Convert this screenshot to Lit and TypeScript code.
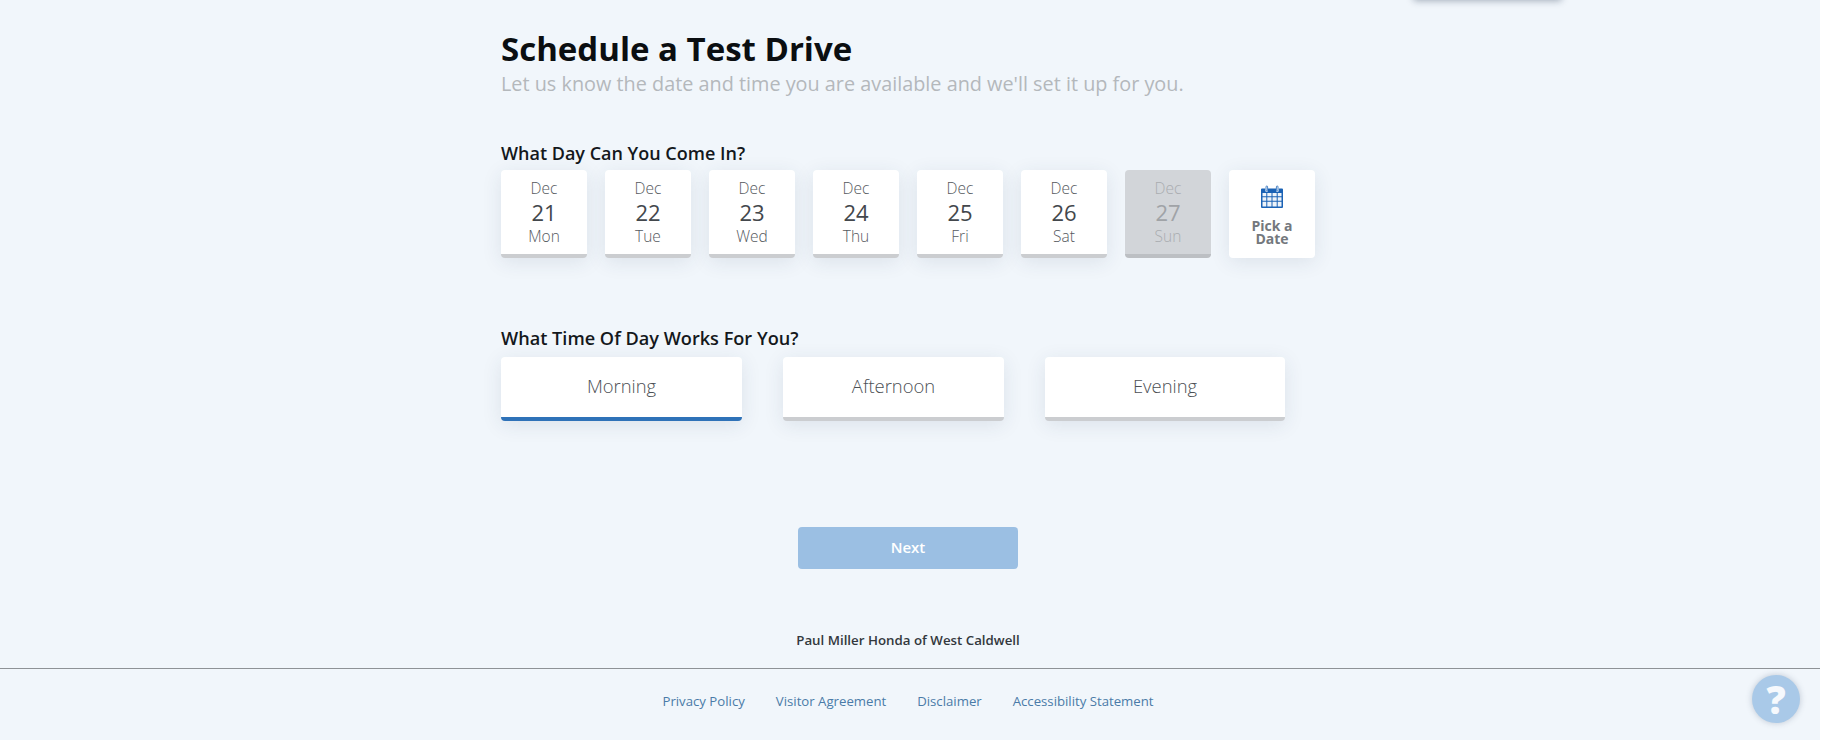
import { LitElement, html, css, svg } from "lit";
import { customElement } from "lit/decorators.js";

const days = [
  ["Dec", "21", "Mon"],
  ["Dec", "22", "Tue"],
  ["Dec", "23", "Wed"],
  ["Dec", "24", "Thu"],
  ["Dec", "25", "Fri"],
  ["Dec", "26", "Sat"],
  ["Dec", "27", "Sun"],
];

const calendar = svg`<svg class="cal" viewBox="0 0 22 23" width="22" height="23" aria-hidden="true">
  <path fill="#1a62b5" d="M1 3.5h3.2V5.5a1.4 1.4 0 0 0 2.8 0V3.5h8V5.5a1.4 1.4 0 0 0 2.8 0V3.5H21a1 1 0 0 1 1 1V22a1 1 0 0 1-1 1H1a1 1 0 0 1-1-1V4.5a1 1 0 0 1 1-1z"/>
  <rect x="5" y="1" width="1.6" height="5" rx=".8" fill="#fff" stroke="#1a62b5" stroke-width=".8"/>
  <rect x="15.4" y="1" width="1.6" height="5" rx=".8" fill="#fff" stroke="#1a62b5" stroke-width=".8"/>
  <path fill="#fff" fill-opacity=".92" d="M1.5 8h3.8v3.2H1.5zM6.3 8h4.2v3.2H6.3zM11.5 8h4.2v3.2h-4.2zM16.7 8h3.8v3.2h-3.8zM1.5 12.2h3.8v3.6H1.5zM6.3 12.2h4.2v3.6H6.3zM11.5 12.2h4.2v3.6h-4.2zM16.7 12.2h3.8v3.6h-3.8zM1.5 16.8h3.8v4.7H1.5zM6.3 16.8h4.2v4.7H6.3zM11.5 16.8h4.2v4.7h-4.2zM16.7 16.8h3.8v4.7h-3.8z"/>
</svg>`;

@customElement("app-root")
export class AppRoot extends LitElement {
  static styles = css`
    :host {
      display: block;
      height: 740px;
      overflow: hidden;
      position: relative;
      background: #fff;
      font-family: "Open Sans", "Noto Sans", sans-serif;
    }
    .page {
      display: flex;
      flex-direction: column;
      width: 1820px;
      height: 740px;
      background: #f1f6fb;
    }
    .menu-edge {
      position: absolute;
      left: 1413px;
      top: -40px;
      width: 149px;
      height: 40px;
      border-radius: 4px;
      background: #fff;
      box-shadow: 0 1px 7px rgba(20, 40, 70, 0.35);
    }
    .main {
      width: 814px;
      margin-left: 501px;
      padding-top: 27px;
    }
    h1 {
      margin: 0;
      font-size: 33px;
      line-height: 44px;
      font-weight: 700;
      color: #0b0e11;
    }
    .sub {
      margin: -1px 0 0;
      font-size: 19.84px;
      line-height: 27px;
      font-weight: 400;
      color: #b4b8bc;
    }
    h2 {
      margin: 0;
      font-size: 18px;
      line-height: 24px;
      font-weight: 600;
      color: #14181c;
    }
    .h-day {
      margin-top: 44px;
    }
    .h-time {
      margin-top: 68px;
      font-size: 18.15px;
    }
    .days {
      display: flex;
      gap: 18px;
      margin-top: 5px;
    }
    .card {
      box-sizing: border-box;
      background: #fff;
      border-radius: 4px;
      border-bottom: 4px solid #cbcdd0;
      box-shadow: 0 4px 20px rgba(40, 60, 90, 0.1);
    }
    .day {
      width: 86px;
      height: 88px;
      display: flex;
      flex-direction: column;
      align-items: center;
      padding-top: 8px;
      color: #55595e;
      font-size: 15.5px;
      line-height: 20px;
      font-weight: 300;
    }
    .day b {
      font-size: 22px;
      line-height: 28px;
      font-weight: 400;
      color: #43474c;
    }
    .day.off {
      background: #d2d5d9;
      border-bottom-color: #bcbfc3;
      box-shadow: none;
      color: #a9acb0;
    }
    .day.off b {
      color: #a0a3a7;
    }
    .pick {
      width: 86px;
      height: 88px;
      box-sizing: border-box;
      background: #fff;
      border-radius: 4px;
      box-shadow: 0 4px 20px rgba(40, 60, 90, 0.1);
      display: flex;
      flex-direction: column;
      align-items: center;
      padding-top: 15px;
      font-size: 14px;
      line-height: 13px;
      font-weight: 700;
      color: #74787d;
      text-align: center;
    }
    .cal {
      display: block;
      margin-bottom: 11px;
    }
    .times {
      display: flex;
      gap: 41px;
      margin-top: 7px;
    }
    .time {
      box-sizing: border-box;
      height: 64px;
      padding-bottom: 4px;
      display: flex;
      align-items: center;
      justify-content: center;
      font-size: 18.4px;
      font-weight: 300;
      color: #4c5055;
    }
    .time.on {
      border-bottom-color: #2f72b8;
    }
    .next-wrap {
      display: flex;
      justify-content: center;
      margin-top: 106px;
    }
    .next {
      width: 220px;
      height: 42px;
      padding: 0 0 2px;
      border: 0;
      border-radius: 4px;
      background: #9bbfe3;
      color: #fff;
      font: 600 15px "Open Sans", sans-serif;
    }
    .dealer {
      margin: 62px 0 0;
      text-align: center;
      font-size: 13.3px;
      line-height: 18px;
      font-weight: 600;
      color: #33383d;
    }
    .footer {
      margin-top: 19px;
      border-top: 1px solid #8e9296;
      display: flex;
      justify-content: center;
      box-sizing: border-box;
      padding: 23px 4px 0 0;
      gap: 31px;
    }
    .footer a {
      font-size: 13.2px;
      line-height: 18px;
      color: #4a7ba8;
      text-decoration: none;
    }
    .help {
      position: absolute;
      left: 1752px;
      top: 675px;
      width: 48px;
      height: 48px;
      border-radius: 50%;
      background: #a9c9e8;
      box-shadow: 0 0 6px rgba(40, 60, 90, 0.25);
      display: flex;
      align-items: center;
      justify-content: center;
      color: #f6f9fd;
      font-size: 38px;
      font-weight: 800;
    }
  `;

  render() {
    return html`
      <div class="page">
        <div class="main">
          <h1>Schedule a Test Drive</h1>
          <p class="sub">Let us know the date and time you are available and we'll set it up for you.</p>
          <h2 class="h-day">What Day Can You Come In?</h2>
          <div class="days">
            ${days.map(
              ([m, d, w], i) => html`<div class="card day ${i === 6 ? "off" : ""}">
                <span>${m}</span><b>${d}</b><span>${w}</span>
              </div>`
            )}
            <div class="pick">${calendar}<span>Pick a<br />Date</span></div>
          </div>
          <h2 class="h-time">What Time Of Day Works For You?</h2>
          <div class="times">
            <div class="card time on" style="width:241px">Morning</div>
            <div class="card time" style="width:221px">Afternoon</div>
            <div class="card time" style="width:240px">Evening</div>
          </div>
          <div class="next-wrap"><button class="next">Next</button></div>
          <p class="dealer">Paul Miller Honda of West Caldwell</p>
        </div>
        <div class="footer">
          <a href="#">Privacy Policy</a>
          <a href="#">Visitor Agreement</a>
          <a href="#">Disclaimer</a>
          <a href="#">Accessibility Statement</a>
        </div>
      </div>
      <div class="menu-edge"></div>
      <div class="help">?</div>
    `;
  }
}
